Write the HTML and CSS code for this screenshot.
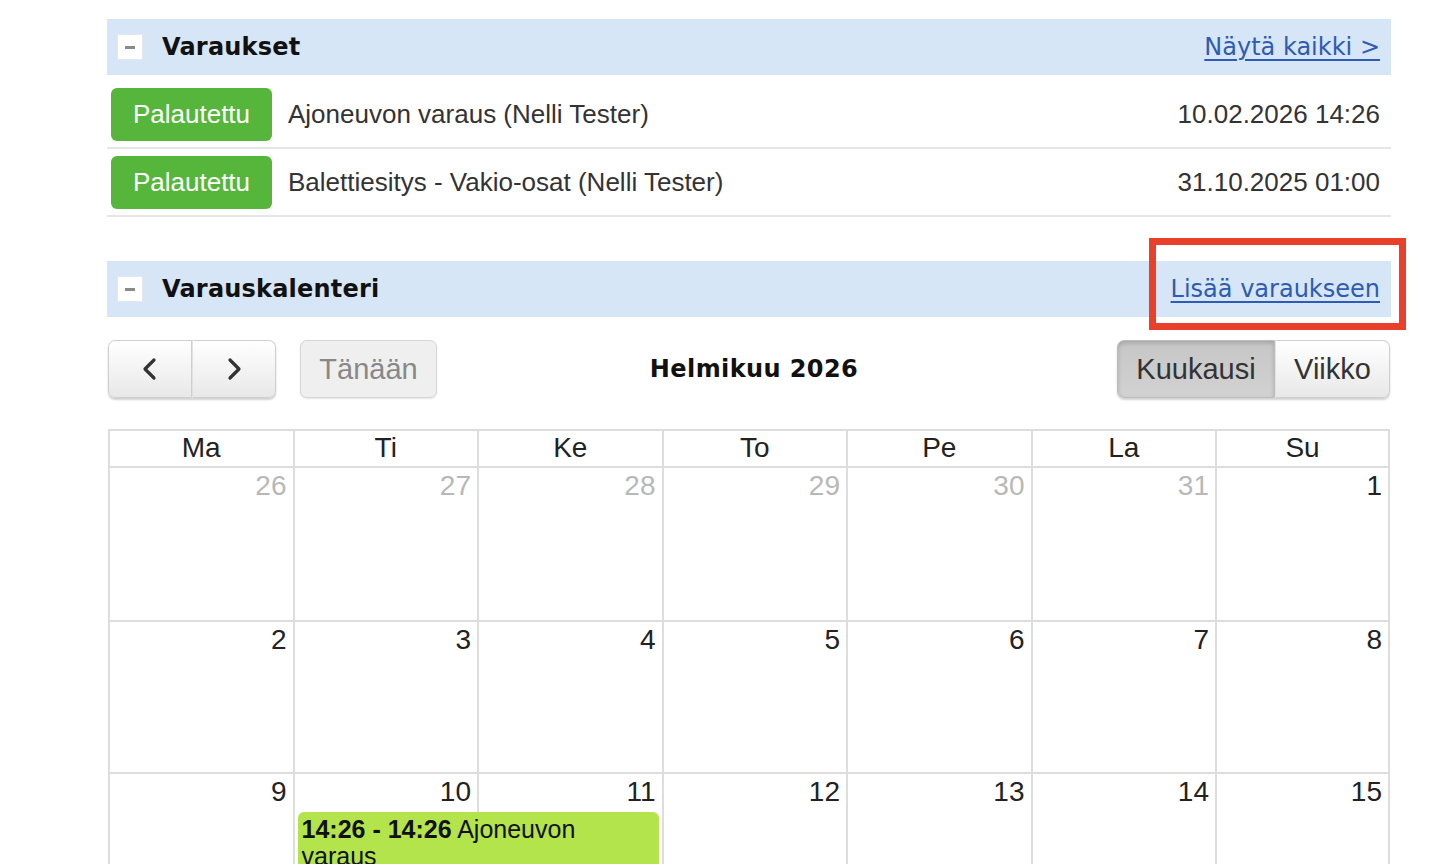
FILE: index.html
```html
<!DOCTYPE html>
<html lang="fi">
<head>
<meta charset="utf-8">
<title>Varaukset</title>
<link rel="stylesheet" href="styles.css">
</head>
<body>
<div class="page">
  <section class="panel">
    <div class="panel-head">
      <span class="toggle"><span class="dash"></span></span>
      <h2 class="panel-title">Varaukset</h2>
      <a class="head-link" href="#">Näytä kaikki &gt;</a>
    </div>
    <ul class="res-list">
      <li class="res-row">
        <span class="badge">Palautettu</span>
        <span class="res-name">Ajoneuvon varaus (Nelli Tester)</span>
        <span class="res-date">10.02.2026 14:26</span>
      </li>
      <li class="res-row">
        <span class="badge">Palautettu</span>
        <span class="res-name">Balettiesitys - Vakio-osat (Nelli Tester)</span>
        <span class="res-date">31.10.2025 01:00</span>
      </li>
    </ul>
  </section>

  <section class="panel cal-panel">
    <div class="panel-head">
      <span class="toggle"><span class="dash"></span></span>
      <h2 class="panel-title">Varauskalenteri</h2>
      <a class="head-link" href="#">Lisää varaukseen</a>
      <span class="highlight"></span>
    </div>

    <div class="toolbar">
      <div class="tb-left">
        <div class="btn-group">
          <button class="btn btn-icon" aria-label="Edellinen">
            <svg width="18" height="24" viewBox="0 0 18 24"><polyline points="13,3 4,12 13,21" fill="none" stroke="#333" stroke-width="3.2" stroke-linecap="round" stroke-linejoin="round"/></svg>
          </button>
          <button class="btn btn-icon" aria-label="Seuraava">
            <svg width="18" height="24" viewBox="0 0 18 24"><polyline points="5,3 14,12 5,21" fill="none" stroke="#333" stroke-width="3.2" stroke-linecap="round" stroke-linejoin="round"/></svg>
          </button>
        </div>
        <button class="btn btn-disabled">Tänään</button>
      </div>
      <h2 class="cal-title">Helmikuu 2026</h2>
      <div class="tb-right">
        <div class="btn-group">
          <button class="btn btn-active">Kuukausi</button>
          <button class="btn">Viikko</button>
        </div>
      </div>
    </div>

    <div class="calendar">
      <div class="cal-head">
        <div class="hcell">Ma</div>
        <div class="hcell">Ti</div>
        <div class="hcell">Ke</div>
        <div class="hcell">To</div>
        <div class="hcell">Pe</div>
        <div class="hcell">La</div>
        <div class="hcell">Su</div>
      </div>
      <div class="week week-1">
        <div class="day other"><span class="num">26</span></div>
        <div class="day other"><span class="num">27</span></div>
        <div class="day other"><span class="num">28</span></div>
        <div class="day other"><span class="num">29</span></div>
        <div class="day other"><span class="num">30</span></div>
        <div class="day other"><span class="num">31</span></div>
        <div class="day"><span class="num">1</span></div>
      </div>
      <div class="week">
        <div class="day"><span class="num">2</span></div>
        <div class="day"><span class="num">3</span></div>
        <div class="day"><span class="num">4</span></div>
        <div class="day"><span class="num">5</span></div>
        <div class="day"><span class="num">6</span></div>
        <div class="day"><span class="num">7</span></div>
        <div class="day"><span class="num">8</span></div>
      </div>
      <div class="week">
        <div class="day"><span class="num">9</span></div>
        <div class="day"><span class="num">10</span></div>
        <div class="day"><span class="num">11</span></div>
        <div class="day"><span class="num">12</span></div>
        <div class="day"><span class="num">13</span></div>
        <div class="day"><span class="num">14</span></div>
        <div class="day"><span class="num">15</span></div>
        <div class="event ev-tue-wed"><b>14:26 - 14:26</b> Ajoneuvon varaus</div>
      </div>
    </div>
  </section>
</div>
</body>
</html>
```

FILE: styles.css
```css
* { box-sizing: border-box; }

html, body {
  margin: 0;
  padding: 0;
  background: #fff;
}

body {
  font-family: "Liberation Sans", Arial, sans-serif;
  color: #333;
  overflow: hidden;
}

.page {
  width: 1284px;
  margin-left: 107px;
  padding-top: 19px;
}

.panel-head {
  position: relative;
  display: flex;
  align-items: center;
  height: 56px;
  background: #d7e6f6;
  padding: 0 11px 0 10px;
}

.toggle {
  width: 26px;
  height: 26px;
  background: #fff;
  border: 1px solid #e4e8ee;
  display: flex;
  align-items: center;
  justify-content: center;
  flex: none;
}

.toggle .dash {
  width: 10px;
  height: 3px;
  background: #8a8a8a;
}

.panel-title {
  margin: 0 0 0 19px;
  font-family: "DejaVu Sans", Verdana, sans-serif;
  font-weight: bold;
  font-size: 24px;
  color: #111;
  letter-spacing: 0.2px;
  flex: 1;
}

.head-link {
  font-family: "DejaVu Sans", Verdana, sans-serif;
  font-size: 24px;
  color: #2d5cb2;
  text-decoration: underline;
  text-underline-offset: 4px;
  text-decoration-thickness: 2px;
}

.highlight {
  position: absolute;
  right: -15px;
  top: -23px;
  width: 257px;
  height: 92px;
  border: 7px solid #e8402a;
  pointer-events: none;
}

.res-list {
  list-style: none;
  margin: 0;
  padding: 6px 0 0;
}

.res-row {
  display: flex;
  align-items: center;
  padding: 7px 11px 6px 4px;
  border-bottom: 2px solid #e6e6e6;
  font-size: 26px;
  color: #333;
}

.badge {
  width: 161px;
  height: 53px;
  background: #55b63b;
  color: #fff;
  border-radius: 6px;
  display: flex;
  align-items: center;
  justify-content: center;
  font-size: 26px;
  flex: none;
}

.res-name {
  margin-left: 16px;
  flex: 1;
}

.res-date {
  color: #333;
}

.cal-panel {
  margin-top: 44px;
}

.toolbar {
  display: grid;
  grid-template-columns: 1fr auto 1fr;
  align-items: center;
  margin: 23px 1px 0;
  height: 58px;
}

.tb-left {
  display: flex;
  align-items: center;
}

.tb-right {
  display: flex;
  justify-content: flex-end;
}

.btn-group {
  display: flex;
  border-radius: 7px;
  box-shadow: 0 2px 2px rgba(0,0,0,0.18);
}

.btn {
  font-family: "Liberation Sans", Arial, sans-serif;
  font-size: 29px;
  color: #333;
  height: 58px;
  padding: 0 18px;
  border: 1px solid #cfcfcf;
  background: linear-gradient(#ffffff, #e8e8e8);
  display: flex;
  align-items: center;
  justify-content: center;
  cursor: pointer;
}

.btn-group .btn:first-child {
  border-radius: 7px 0 0 7px;
}

.btn-group .btn:last-child {
  border-radius: 0 7px 7px 0;
  border-left: 1px solid #e2e2e2;
}

.btn-icon {
  width: 84px;
  padding: 0;
}

.btn-disabled {
  margin-left: 24px;
  width: 137px;
  padding: 0;
  border-radius: 7px;
  background: #efefef;
  color: #888;
  border-color: #d6d6d6;
  box-shadow: 0 1px 2px rgba(0,0,0,0.1);
}

.btn-active {
  width: 158px;
  padding: 0;
  background: linear-gradient(#c6c6c6, #d2d2d2);
  box-shadow: inset 0 2px 4px rgba(0,0,0,0.18);
  border-color: #bdbdbd;
  color: #333;
}

.tb-right .btn:last-child {
  width: 115px;
  padding: 0;
}

.cal-title {
  margin: 0 0 0 10px;
  font-family: "DejaVu Sans", Verdana, sans-serif;
  font-weight: bold;
  font-size: 24px;
  letter-spacing: 0.4px;
  color: #111;
}

.calendar {
  margin: 31px 1px 0;
  border-top: 2px solid #dddddd;
  border-left: 2px solid #dddddd;
}

.cal-head,
.week {
  display: grid;
  grid-template-columns: repeat(6, 184.5px) 1fr;
}

.hcell {
  height: 37px;
  line-height: 33px;
  text-align: center;
  font-size: 28px;
  color: #222;
  border-right: 2px solid #dddddd;
  border-bottom: 2px solid #dddddd;
}

.week {
  grid-template-rows: 38px 1fr;
  height: 152px;
}

.week-1 {
  height: 154px;
}

.day {
  grid-row: 1 / 3;
  border-right: 2px solid #dddddd;
  border-bottom: 2px solid #dddddd;
  text-align: right;
  padding: 2px 6px 0;
}

.day:nth-child(1) { grid-column: 1; }
.day:nth-child(2) { grid-column: 2; }
.day:nth-child(3) { grid-column: 3; }
.day:nth-child(4) { grid-column: 4; }
.day:nth-child(5) { grid-column: 5; }
.day:nth-child(6) { grid-column: 6; }
.day:nth-child(7) { grid-column: 7; }

.num {
  font-size: 28px;
  line-height: 32px;
  color: #222;
}

.day.other .num {
  color: #b8b8b8;
}

.event {
  grid-row: 2;
  align-self: start;
  margin: 0 5px 0 3px;
  background: #b4e44b;
  border-radius: 6px;
  padding: 4px 4px 4px;
  font-size: 25px;
  line-height: 27px;
  color: #111;
  position: relative;
}

.ev-tue-wed {
  grid-column: 2 / 4;
}

.event b {
  font-weight: bold;
}
```
